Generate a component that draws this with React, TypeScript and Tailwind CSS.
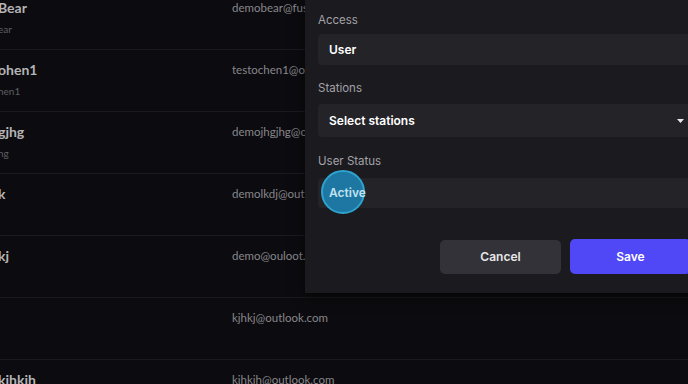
import React from "react";

interface Row {
    name: string;
    sub: string;
    email: string;
}

const rows: Row[] = [
    { name: "Bear", sub: "ear", email: "demobear@fusion.com" },
    { name: "ohen1", sub: "hen1", email: "testochen1@outlook.com" },
    { name: "gjhg", sub: "hg", email: "demojhgjhg@outlook.com" },
    { name: "k", sub: "", email: "demolkdj@outlook.com" },
    { name: "kj", sub: "", email: "demo@ouloot.com" },
    { name: "", sub: "", email: "kjhkj@outlook.com" },
    { name: "kihkih", sub: "", email: "kjhkjh@outlook.com" },
];

const App: React.FC = () => {
    return (
        <div className="relative w-[688px] h-[384px] overflow-hidden bg-[#0c0b0f]">

            {/* Users table (behind the dialog) */}
            <div className="-mt-[12px] font-['Lato',sans-serif]">
                {rows.map((row, i) => (
                    <div key={i} className="flex h-[62px] border-b border-[#1b1a1f]">
                        <div className="w-[234px] pt-[10px] -ml-[2px]">
                            <p className="text-[14px] leading-[20px] font-bold text-[#b4b4b6]">{row.name}</p>
                            <p className="mt-[1px] text-[10px] leading-[20px] text-[#5f5f63]">{row.sub}</p>
                        </div>
                        <div className="pt-[11px]">
                            <p className="text-[11.5px] leading-[18px] text-[#87878b]">{row.email}</p>
                        </div>
                    </div>
                ))}
            </div>

            {/* Edit user dialog */}
            <div className="absolute left-[305px] top-0 w-[420px] h-[293px] bg-[#1b1a1f] shadow-[0_4px_12px_rgba(0,0,0,0.6)] pl-[13px] pt-[12px] font-['Inter',sans-serif]">

                {/* Access */}
                <p className="text-[11.5px] leading-[16px] text-[#a3a2a8]">Access</p>
                <div className="mt-[6px] h-[31px] rounded-[4px] bg-[#242328] flex items-center pl-[11px]">
                    <span className="text-[12px] font-semibold text-white">User</span>
                </div>

                {/* Stations */}
                <p className="mt-[15px] text-[11.5px] leading-[16px] text-[#a3a2a8]">Stations</p>
                <div className="mt-[8px] h-[33px] rounded-[4px] bg-[#242328] flex items-center pl-[11px] w-[383px]">
                    <span className="flex-1 text-[12px] font-semibold text-white">Select stations</span>
                    <svg width="7" height="4" viewBox="0 0 7 4" className="mr-[17px]">
                        <path d="M0 0 L7 0 L3.5 4 Z" fill="#e8e8ea" />
                    </svg>
                </div>

                {/* User Status — click highlight sits behind the value */}
                <p className="mt-[16px] text-[11.5px] leading-[16px] text-[#a3a2a8]">User Status</p>
                <div className="relative mt-[9px] h-[30px] rounded-[4px] bg-[#242328] flex items-center pl-[11px]">
                    <div className="absolute left-[3px] top-[-8px] w-[44px] h-[44px] rounded-full bg-[#1d77a2] border-2 border-[#2fa3cf]" />
                    <span className="relative text-[12px] font-semibold text-[#c2e1f1]">Active</span>
                </div>

                {/* Actions */}
                <div className="mt-[32px] flex gap-[9px] pl-[122px]">
                    <button className="w-[121px] h-[34px] rounded-[5px] bg-[#333238] text-[12px] font-semibold text-[#e6e6e8]">
                        Cancel
                    </button>
                    <button className="w-[121px] h-[35px] -mt-[1px] rounded-[5px] bg-[#5048f7] text-[12px] font-semibold text-white">
                        Save
                    </button>
                </div>
            </div>
        </div>
    );
};

export default App;
